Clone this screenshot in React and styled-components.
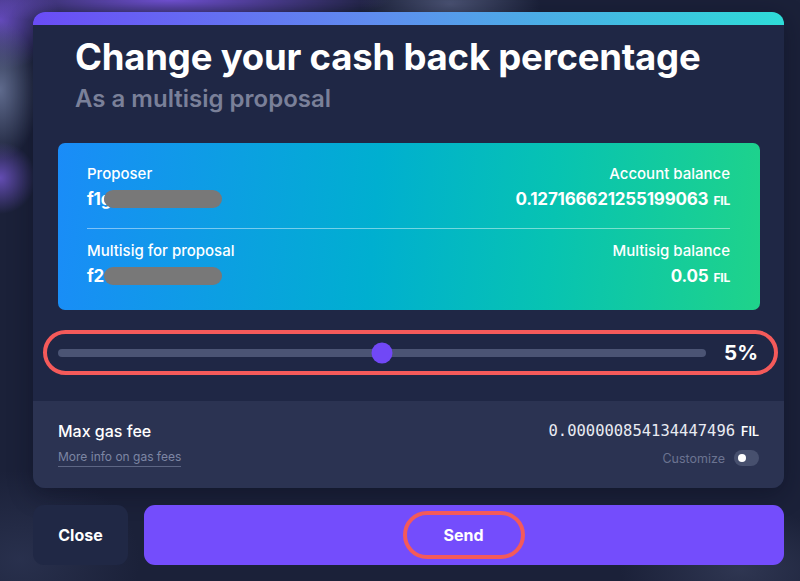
import React from "react";
import styled, { createGlobalStyle } from "styled-components";

const GlobalStyle = createGlobalStyle`
  html, body { margin: 0; padding: 0; background: #1b2139; }
  body { font-family: Inter, "Noto Sans", sans-serif; -webkit-font-smoothing: antialiased; }
  * { box-sizing: border-box; }
`;

const Page = styled.div`
  width: 800px;
  height: 581px;
  overflow: hidden;
  padding: 12px 16px 0 33px;
  display: flex;
  flex-direction: column;
  background:
    radial-gradient(ellipse 220px 26px at 170px 0px, rgba(118, 84, 220, 0.95), rgba(118, 84, 220, 0) 100%),
    radial-gradient(ellipse 90px 40px at 450px 4px, rgba(95, 104, 140, 0.7), rgba(95, 104, 140, 0) 100%),
    radial-gradient(ellipse 40px 70px at 0px 90px, rgba(98, 110, 145, 0.95), rgba(98, 110, 145, 0) 100%),
    radial-gradient(ellipse 36px 36px at 0px 178px, rgba(112, 84, 200, 0.85), rgba(112, 84, 200, 0) 100%),
    radial-gradient(ellipse 60px 50px at 0px 20px, rgba(118, 84, 220, 0.8), rgba(118, 84, 220, 0) 100%),
    radial-gradient(ellipse 120px 60px at 740px 570px, rgba(60, 68, 98, 0.6), rgba(60, 68, 98, 0) 100%),
    radial-gradient(ellipse 120px 90px at 20px 560px, rgba(44, 52, 82, 0.8), rgba(44, 52, 82, 0) 100%),
    #1b2139;
`;

const Card = styled.div`
  width: 751px;
  border-radius: 12px;
  background: #1f2745;
  overflow: hidden;
  box-shadow: 0 6px 24px rgba(8, 12, 28, 0.45);
`;

const TopBar = styled.div`
  height: 13px;
  background: linear-gradient(90deg, #6a4cf6 0%, #5f8cef 45%, #2edcd8 100%);
`;

const Header = styled.div`
  padding: 11px 42px 0;
`;

const Title = styled.h1`
  margin: 0;
  font-size: 36.5px;
  line-height: 42px;
  font-weight: 700;
  color: #ffffff;
  letter-spacing: -0.2px;
`;

const Subtitle = styled.h2`
  margin: 7px 0 0;
  font-size: 24px;
  line-height: 28px;
  font-weight: 600;
  color: #7a8099;
`;

const Body = styled.div`
  padding: 30px 24px 26px 25px;
`;

const Panel = styled.div`
  height: 167px;
  border-radius: 7px;
  padding: 21px 30px 0 29px;
  background: linear-gradient(95deg, #1a8cf8 0%, #00afd0 45%, #07c3b2 70%, #1fd38a 100%);
`;

const PanelRow = styled.div`
  display: flex;
  justify-content: space-between;
`;

const Divider = styled.div`
  height: 1px;
  background: rgba(255, 255, 255, 0.45);
  margin: 16px 0 12px;
`;

const Field = styled.div`
  display: flex;
  flex-direction: column;
  gap: 4px;
  align-items: ${(p) => (p.$right ? "flex-end" : "flex-start")};
`;

const Label = styled.div`
  font-size: 15px;
  line-height: 20px;
  font-weight: 500;
  color: #ffffff;
`;

const Value = styled.div`
  position: relative;
  font-size: 17px;
  line-height: 22px;
  font-weight: 700;
  color: #ffffff;
  letter-spacing: -0.2px;
  white-space: nowrap;
`;

const Unit = styled.span`
  font-size: 12px;
  font-weight: 700;
  margin-left: 5px;
`;

const Redacted = styled.span`
  position: absolute;
  left: 17px;
  top: 2px;
  width: 118px;
  height: 18px;
  border-radius: 9px;
  background: #787878;
`;

const SliderBox = styled.div`
  margin: 20px -18px 0 -15px;
  height: 45px;
  border: 4px solid #f45a5a;
  border-radius: 23px;
  display: flex;
  align-items: center;
  padding: 0 16px 0 11px;
  gap: 18px;
`;

const Track = styled.div`
  position: relative;
  flex: 1;
  height: 8px;
  border-radius: 4px;
  background: #4b5474;
`;

const Thumb = styled.div`
  position: absolute;
  top: 50%;
  width: 21px;
  height: 21px;
  border-radius: 50%;
  background: #7148f6;
  transform: translate(-50%, -50%);
`;

const Percent = styled.div`
  font-size: 20.5px;
  font-weight: 700;
  color: #ffffff;
  line-height: 28px;
`;

const Footer = styled.div`
  background: #2b3352;
  height: 87px;
  padding: 20px 25px 0 25px;
  display: flex;
  justify-content: space-between;
`;

const FooterCol = styled.div`
  display: flex;
  flex-direction: column;
  align-items: ${(p) => (p.$right ? "flex-end" : "flex-start")};
`;

const FeeLabel = styled.div`
  font-size: 16px;
  line-height: 20px;
  font-weight: 500;
  color: #ffffff;
`;

const InfoLink = styled.a`
  margin-top: 8px;
  font-size: 12px;
  line-height: 16px;
  color: #7d86a3;
  text-decoration: none;
  border-bottom: 1px solid #5d6684;
  padding-bottom: 1px;
`;

const FeeValue = styled.div`
  display: flex;
  align-items: baseline;
  color: #ffffff;
`;

const Mono = styled.span`
  font-family: "DejaVu Sans Mono", "Liberation Mono", monospace;
  font-size: 15.5px;
  line-height: 20px;
  color: #e9ebf2;
`;

const FeeUnit = styled.span`
  font-size: 12.5px;
  font-weight: 600;
  margin-left: 6px;
`;

const CustomizeRow = styled.div`
  margin-top: 9px;
  display: flex;
  align-items: center;
  gap: 9px;
`;

const CustomizeText = styled.span`
  font-size: 12.5px;
  color: #6b7391;
`;

const Toggle = styled.div`
  width: 25px;
  height: 16px;
  border-radius: 8px;
  background: #47506e;
  display: flex;
  align-items: center;
  padding-left: 4px;
`;

const Knob = styled.div`
  width: 8px;
  height: 8px;
  border-radius: 50%;
  background: #ffffff;
`;

const Actions = styled.div`
  margin-top: 17px;
  display: flex;
  gap: 16px;
`;

const Button = styled.button`
  height: 60px;
  border: none;
  border-radius: 11px;
  font-family: Inter, sans-serif;
  font-size: 16px;
  font-weight: 700;
  color: #ffffff;
  display: flex;
  align-items: center;
  justify-content: center;
  background: ${(p) => (p.$primary ? "#744dfc" : "#202845")};
  width: ${(p) => (p.$primary ? "640px" : "95px")};
  padding: 0;
`;

const Highlight = styled.span`
  width: 122px;
  height: 48px;
  border: 4px solid #f45a5a;
  border-radius: 24px;
  display: flex;
  align-items: center;
  justify-content: center;
  margin-right: 1px;
`;

export default function App() {
  return (
    <>
      <GlobalStyle />
      <Page>
        <Card>
          <TopBar />
          <Header>
            <Title>Change your cash back percentage</Title>
            <Subtitle>As a multisig proposal</Subtitle>
          </Header>
          <Body>
            <Panel>
              <PanelRow>
                <Field>
                  <Label>Proposer</Label>
                  <Value>
                    f1g
                    <Redacted />
                  </Value>
                </Field>
                <Field $right>
                  <Label>Account balance</Label>
                  <Value>
                    0.127166621255199063<Unit>FIL</Unit>
                  </Value>
                </Field>
              </PanelRow>
              <Divider />
              <PanelRow>
                <Field>
                  <Label>Multisig for proposal</Label>
                  <Value>
                    f2
                    <Redacted />
                  </Value>
                </Field>
                <Field $right>
                  <Label>Multisig balance</Label>
                  <Value>
                    0.05<Unit>FIL</Unit>
                  </Value>
                </Field>
              </PanelRow>
            </Panel>
            <SliderBox>
              <Track>
                <Thumb style={{ left: "50%" }} />
              </Track>
              <Percent>5%</Percent>
            </SliderBox>
          </Body>
          <Footer>
            <FooterCol>
              <FeeLabel>Max gas fee</FeeLabel>
              <InfoLink>More info on gas fees</InfoLink>
            </FooterCol>
            <FooterCol $right>
              <FeeValue>
                <Mono>0.000000854134447496</Mono>
                <FeeUnit>FIL</FeeUnit>
              </FeeValue>
              <CustomizeRow>
                <CustomizeText>Customize</CustomizeText>
                <Toggle>
                  <Knob />
                </Toggle>
              </CustomizeRow>
            </FooterCol>
          </Footer>
        </Card>
        <Actions>
          <Button>Close</Button>
          <Button $primary>
            <Highlight>Send</Highlight>
          </Button>
        </Actions>
      </Page>
    </>
  );
}
